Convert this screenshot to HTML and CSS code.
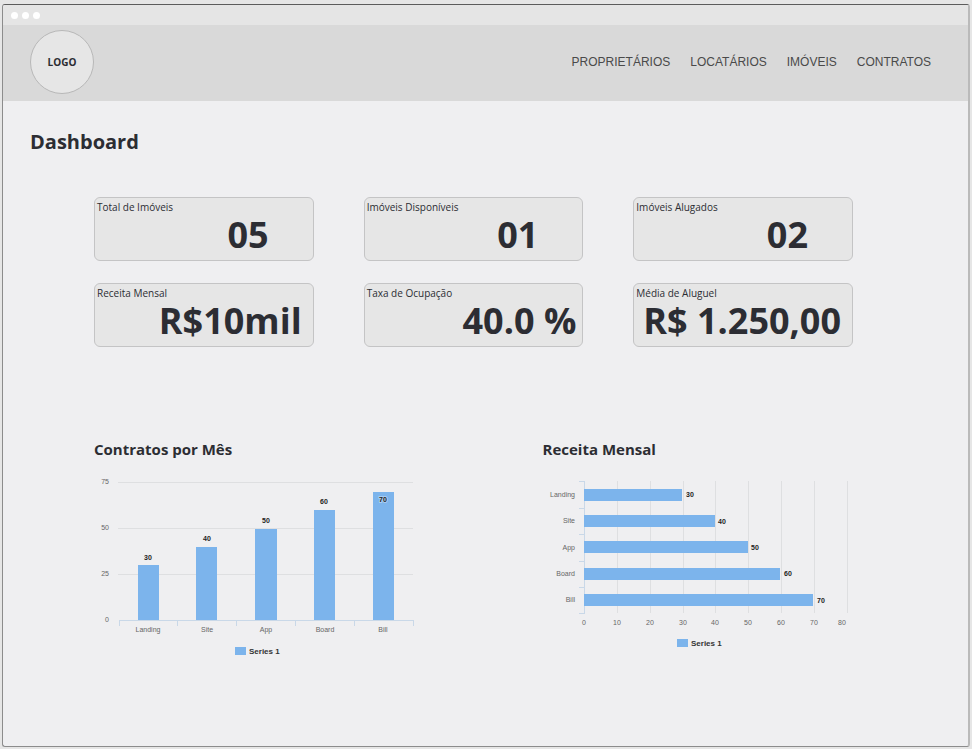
FILE: index.html
```html
<!DOCTYPE html>
<html lang="pt-BR">
<head>
<meta charset="utf-8">
<meta name="viewport" content="width=device-width, initial-scale=1">
<title>Dashboard</title>
<link rel="stylesheet" href="styles.css">
</head>
<body>
<div class="window">
  <div class="titlebar"><span class="dot"></span><span class="dot"></span><span class="dot"></span></div>
  <header class="header">
    <div class="logo">LOGO</div>
    <nav class="nav">
      <a href="#proprietarios">PROPRIETÁRIOS</a>
      <a href="#locatarios">LOCATÁRIOS</a>
      <a href="#imoveis">IMÓVEIS</a>
      <a href="#contratos">CONTRATOS</a>
    </nav>
  </header>
  <main class="main">
    <h1 class="title">Dashboard</h1>
    <div class="content">
      <section class="cards">
        <article class="card"><h2 class="label">Total de Imóveis</h2><p class="value value-count">05</p></article>
        <article class="card"><h2 class="label">Imóveis Disponíveis</h2><p class="value value-count">01</p></article>
        <article class="card"><h2 class="label">Imóveis Alugados</h2><p class="value value-count">02</p></article>
        <article class="card"><h2 class="label">Receita Mensal</h2><p class="value value-money">R$10mil</p></article>
        <article class="card"><h2 class="label">Taxa de Ocupação</h2><p class="value value-percent">40.0 %</p></article>
        <article class="card"><h2 class="label">Média de Aluguel</h2><p class="value value-money">R$ 1.250,00</p></article>
      </section>
      <div class="charts">
        <section>
          <h2 class="chart-title">Contratos por Mês</h2>
          <svg class="chart" width="330" height="190" viewBox="0 0 330 190" role="img" aria-label="Contratos por Mês">
            <path class="grid" d="M24 12H319M24 58H319M24 104H319"/>
            <path class="axis" d="M25 156V150H319V156M83 150V156M142 150V156M201 150V156M260 150V156"/>
            <g class="bar">
              <rect x="44" y="95" width="21" height="55"/>
              <rect x="102" y="77" width="21" height="73"/>
              <rect x="161" y="59" width="22" height="91"/>
              <rect x="220" y="40" width="21" height="110"/>
              <rect x="279" y="22" width="21" height="128"/>
            </g>
            <g class="tick end">
              <text x="15" y="14">75</text><text x="15" y="60">50</text><text x="15" y="106">25</text><text x="15" y="152">0</text>
            </g>
            <g class="tick middle">
              <text x="54" y="162">Landing</text><text x="113" y="162">Site</text><text x="172" y="162">App</text><text x="231" y="162">Board</text><text x="289" y="162">Bill</text>
            </g>
            <g class="data middle">
              <text x="54" y="90">30</text><text x="113" y="71">40</text><text x="172" y="53">50</text><text x="230" y="34">60</text><text class="inside" x="289" y="32">70</text>
            </g>
            <rect class="bar" x="141" y="177" width="11" height="8"/>
            <text class="legend" x="155" y="184">Series 1</text>
          </svg>
        </section>
        <section>
          <h2 class="chart-title">Receita Mensal</h2>
          <svg class="chart" width="310" height="190" viewBox="0 0 310 190" role="img" aria-label="Receita Mensal">
            <path class="grid" d="M74 11V143M107 11V143M140 11V143M172 11V143M205 11V143M238 11V143M271 11V143M304 11V143"/>
            <path class="axis" d="M36 11H41V143H36M36 38H41M36 64H41M36 91H41M36 117H41"/>
            <g class="bar">
              <rect x="41" y="19" width="98" height="12"/>
              <rect x="41" y="45" width="131" height="12"/>
              <rect x="41" y="71" width="164" height="12"/>
              <rect x="41" y="98" width="196" height="12"/>
              <rect x="41" y="124" width="229" height="12"/>
            </g>
            <g class="tick end">
              <text x="32" y="27">Landing</text><text x="32" y="53">Site</text><text x="32" y="80">App</text><text x="32" y="106">Board</text><text x="32" y="132">Bill</text>
            </g>
            <g class="tick middle">
              <text x="41" y="155">0</text><text x="74" y="155">10</text><text x="107" y="155">20</text><text x="140" y="155">30</text><text x="172" y="155">40</text><text x="205" y="155">50</text><text x="238" y="155">60</text><text x="271" y="155">70</text><text x="299" y="155">80</text>
            </g>
            <g class="data">
              <text x="143" y="27">30</text><text x="175" y="54">40</text><text x="208" y="80">50</text><text x="241" y="106">60</text><text x="274" y="133">70</text>
            </g>
            <rect class="bar" x="134" y="169" width="11" height="8"/>
            <text class="legend" x="148" y="176">Series 1</text>
          </svg>
        </section>
      </div>
    </div>
  </main>
</div>
</body>
</html>
```
FILE: styles.css
```css
* {
  box-sizing: border-box;
}

body {
  margin: 0;
  padding: 4px 2px 2px;
  background: #e6e6e6;
  color: #2c2d33;
  font-family: "Open Sans", "Noto Sans", sans-serif;
}

h1, h2, p {
  margin: 0;
}

.window {
  display: flex;
  flex-direction: column;
  min-height: calc(100vh - 6px);
  border: 1px solid #8c8c8c;
  border-top-color: #5c5c5c;
  border-right: 2px solid #bababa;
  border-radius: 3px;
  background: #efeff1;
  overflow: hidden;
}

.titlebar {
  display: flex;
  align-items: center;
  gap: 4px;
  height: 20px;
  padding-left: 8px;
  background: #e5e5e5;
}

.dot {
  width: 7px;
  height: 7px;
  border-radius: 50%;
  background: #fff;
}

.header {
  display: flex;
  align-items: center;
  justify-content: space-between;
  height: 76px;
  padding: 0 37px 2px 27px;
  background: #d9d9d9;
}

.logo {
  display: flex;
  align-items: center;
  justify-content: center;
  width: 64px;
  height: 64px;
  border: 1px solid #b8b8b8;
  border-radius: 50%;
  background: #e6e6e6;
  font-size: 10px;
  font-weight: 700;
}

.nav {
  display: flex;
  gap: 20px;
}

.nav a {
  color: #4a4a4a;
  font-family: "Liberation Sans", Arial, sans-serif;
  font-size: 12px;
  text-decoration: none;
}

.main {
  padding: 27px 27px 40px;
}

.title {
  font-size: 20px;
  line-height: 28px;
}

.content {
  padding: 41px 88px 0 64px;
}

.cards {
  display: grid;
  grid-template-columns: repeat(3, 1fr);
  gap: 22px 50px;
}

.card {
  height: 64px;
  padding: 2px 0 0 2px;
  border: 1px solid #c4c4c5;
  border-radius: 6px;
  background: #e6e6e6;
}

.label {
  font-size: 10px;
  font-weight: 400;
  line-height: 14px;
}

.value {
  font-size: 36px;
  font-weight: 700;
  line-height: 42px;
  text-align: right;
  white-space: nowrap;
}

.value-count {
  padding-right: 44px;
}

.value-money {
  padding-right: 11px;
}

.value-percent {
  padding-right: 6px;
}

.charts {
  display: grid;
  grid-template-columns: 13fr 9fr;
  margin-top: 92px;
}

.chart-title {
  font-size: 15px;
  line-height: 20px;
}

.chart {
  display: block;
  max-width: 100%;
  margin-top: 11px;
  font-family: "Liberation Sans", Arial, sans-serif;
  font-size: 7px;
}

.grid,
.axis {
  fill: none;
  stroke: #dedfe1;
  shape-rendering: crispEdges;
}

.axis {
  stroke: #c9d8e8;
}

.bar {
  fill: #7cb4ec;
}

.tick {
  fill: #666;
}

.data {
  fill: #222;
  font-weight: 700;
}

.inside {
  paint-order: stroke;
  stroke: #a9cdf2;
  stroke-width: 2px;
}

.middle {
  text-anchor: middle;
}

.end {
  text-anchor: end;
}

.legend {
  fill: #333;
  font-size: 8px;
  font-weight: 700;
}
```
